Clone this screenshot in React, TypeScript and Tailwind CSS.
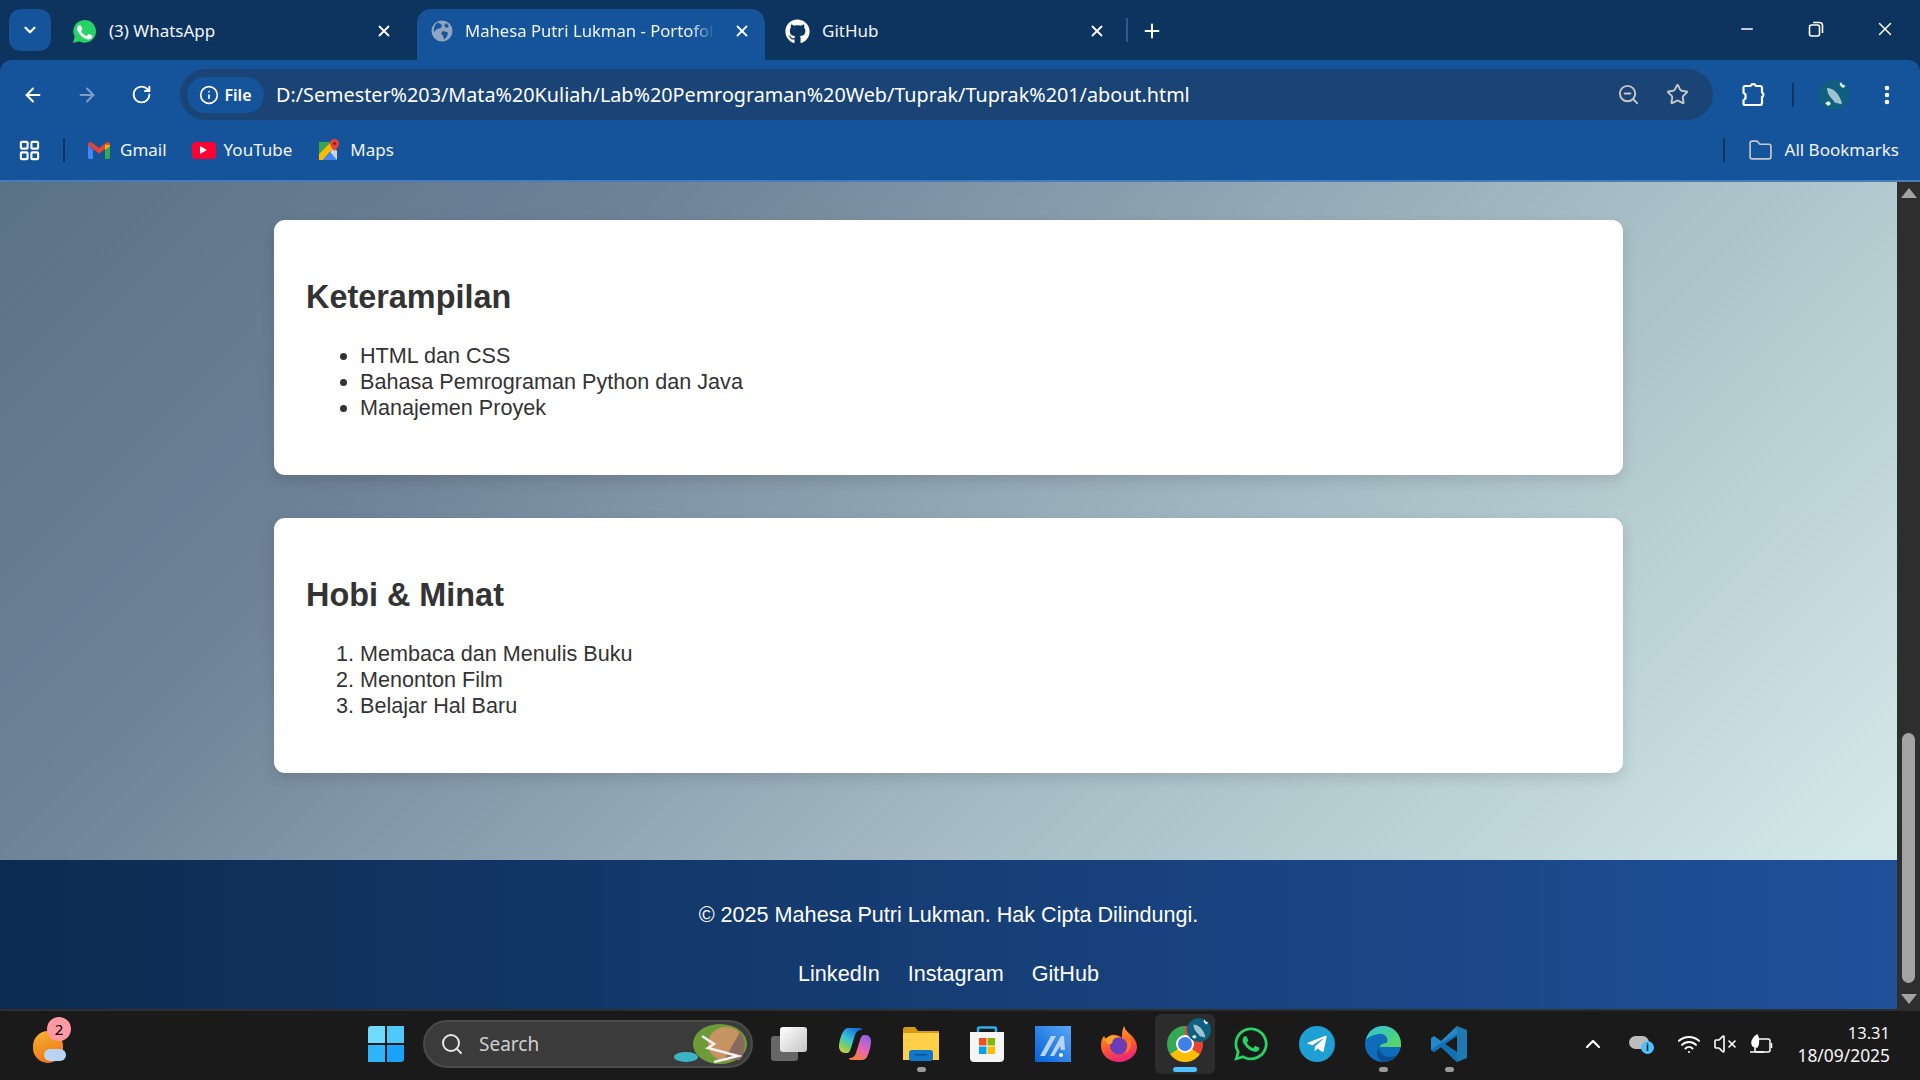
import React from 'react';
import { ArrowLeft, ArrowRight, RotateCw, Info, ZoomOut, Star, EllipsisVertical, Folder, X, Plus, Minus, ChevronDown, ChevronUp, Search, Wifi, VolumeX, LayoutGrid } from 'lucide-react';
import { FaGithub, FaWhatsapp, FaTelegramPlane } from 'react-icons/fa';

function WhatsAppColor({ size = 24 }: { size?: number }) {
  return (
    <svg width={size} height={size} viewBox="0 0 24 24">
      <path fill="#25d366" d="M1 23l1.600-5.900A10.900 10.900 0 1 1 6.900 21.400z" />
      <path fill="#fff" d="M8.600 6.600c-.3-.6-.5-.6-.8-.6h-.7c-.3 0-.6.1-1 .5-.3.4-1.200 1.200-1.200 3s1.300 3.400 1.500 3.700c.2.200 2.500 4 6.200 5.400 3 1.200 3.600 1 4.300.9.600-.1 2.100-.9 2.400-1.700.3-.8.300-1.500.2-1.700-.1-.1-.3-.2-.7-.4l-2.400-1.200c-.3-.1-.6-.2-.8.2l-1.100 1.400c-.2.200-.4.300-.8.100-.4-.2-1.500-.6-2.900-1.800-1.100-1-1.800-2.200-2-2.500-.2-.4 0-.6.2-.8l.5-.6c.2-.2.200-.4.400-.6.100-.2 0-.5 0-.7z" />
    </svg>
  );
}

function GmailIcon() {
  return (
    <svg width="22" height="17" viewBox="0 0 22 17">
      <path fill="#4285f4" d="M0 3v12.500C0 16.300.7 17 1.500 17H5V8z" />
      <path fill="#34a853" d="M22 3v12.500c0 .8-.7 1.500-1.500 1.500H17V8z" />
      <path fill="#ea4335" d="M0 3l5 4 6 4.500L17 7l5-4c0-2.500-2-3.500-3.500-2.500L11 6 3.500.5C2 -.5 0 .5 0 3z" />
      <path fill="#fbbc04" d="M17 2.800L22 3v1l-5 4z" />
    </svg>
  );
}

function YouTubeIcon() {
  return (
    <div className="w-6 h-[17px] rounded-[4px] bg-[#ff0033] flex items-center justify-center">
      <div className="w-0 h-0 border-y-[4px] border-y-transparent border-l-[7px] border-l-white" />
    </div>
  );
}

function MapsIcon() {
  return (
    <svg width="21" height="22" viewBox="0 0 21 22">
      <path fill="#34a853" d="M0 3h12L0 15z" />
      <path fill="#fbbc04" d="M0 15L12 3l3 5L4 21H0z" />
      <path fill="#4285f4" d="M4 21l7-8 7 8z" />
      <path fill="#c8d4e0" d="M11 13l4-5 3 4v9z" />
      <path fill="#ea4335" d="M15.500 0a4.500 4.500 0 0 0-4.500 4.500c0 3 4.500 7.500 4.500 7.500s4.500-4.500 4.500-7.500A4.500 4.500 0 0 0 15.500 0z" />
      <circle cx="15.500" cy="4.500" r="1.600" fill="#8f1d14" />
    </svg>
  );
}

function Avatar({ size }: { size: number }) {
  return (
    <svg width={size} height={size} viewBox="0 0 30 30">
      <circle cx="15" cy="15" r="15" fill="#0f5f7e" />
      <path d="M8 8c6 0 12 5 15 15-1 2-3 1-4 0-2 1-4-1-5-3C11 17 8 13 8 8z" fill="#9fc3d1" />
      <path d="M22 2l1.500 2.500 3 1-2 2.500-2-1-2-2.500z" fill="#dcecf2" />
      <path d="M6 23l4-2 2 3-3 2z" fill="#eef4f6" />
    </svg>
  );
}

function PuzzleIcon() {
  return (
    <svg width="26" height="25" viewBox="0 0 26 25" fill="none" stroke="white" strokeWidth="2.200" strokeLinejoin="round">
      <path d="M3 4h5.500a3 3 0 0 1 5.500 0h4a2 2 0 0 1 2 2v4.500a2.500 2.500 0 0 1 0 4.500v6a2 2 0 0 1-2 2H3a1.500 1.500 0 0 1-1.500-1.500V18a3 3 0 0 0 2-3.500 3 3 0 0 0-2-3.500V5.500A1.500 1.500 0 0 1 3 4z" />
    </svg>
  );
}

function TabStrip() {
  return (
    <div className="h-[60px] bg-[#0d335f] flex items-end pl-[9px]">
      <div className="w-[42px] h-[42px] mb-[9px] rounded-[12px] bg-[#15539a] flex items-center justify-center shrink-0">
        <ChevronDown size={18} strokeWidth={3} className="text-white" />
      </div>
      <div className="ml-[12px] w-[354px] shrink-0 flex items-center h-[51px] pb-[7px] pl-[9px] pr-[24px]">
        <WhatsAppColor size={25} />
        <span className="ml-[12px] flex-1 text-[17px] text-[#f1f5fa]">(3) WhatsApp</span>
        <X size={18} strokeWidth={2.400} className="text-white" />
      </div>
      <div className="w-[348px] shrink-0 flex items-center h-[51px] pb-[7px] pl-[14px] pr-[14px] bg-[#15539a] rounded-t-[14px]">
        <svg width="22" height="22" viewBox="0 0 22 22" className="shrink-0">
          <circle cx="11" cy="11" r="10.500" fill="#8fa6c1" />
          <path fill="#15539a" d="M7 2.500l4 2.500-1 3-4 1-3 3c-.5-4 1-8 4-9.500zM12 11l5 1.500-1 4-3 3-1-4-2-2zM15 3l3 3-2 2-3-2z" />
        </svg>
        <span className="ml-[12px] flex-1 overflow-hidden whitespace-nowrap text-[16.700px] text-[#f1f5fa] [mask-image:linear-gradient(90deg,#000_90%,transparent)]">Mahesa Putri Lukman - Portofolio</span>
        <X size={18} strokeWidth={2.400} className="ml-[18px] shrink-0 text-white" />
      </div>
      <div className="ml-[3px] w-[360px] shrink-0 flex items-center h-[51px] pb-[7px] pl-[17px] pr-[22px]">
        <FaGithub size={25} className="text-white" />
        <span className="ml-[12px] flex-1 text-[17px] text-[#f1f5fa]">GitHub</span>
        <X size={18} strokeWidth={2.400} className="text-white" />
      </div>
      <div className="w-[2px] h-[24px] mb-[18px] bg-[#2d5a8e] -ml-[2px]" />
      <Plus size={22} strokeWidth={2.200} className="ml-[13px] mb-[18px] text-white" />
      <div className="ml-auto flex items-center h-[60px] pb-[2px]">
        <Minus size={18} strokeWidth={2} className="text-white mr-[52px]" />
        <svg width="16" height="16" viewBox="0 0 16 16" fill="none" stroke="white" strokeWidth="1.600" className="mr-[50px]">
          <rect x="1.500" y="4" width="10" height="11" rx="2" />
          <path d="M5 1.500h6.500a3 3 0 0 1 3 3V12" />
        </svg>
        <X size={22} strokeWidth={1.600} className="text-white mr-[24px]" />
      </div>
    </div>
  );
}

function Toolbar() {
  return (
    <div className="h-[60px] flex items-center pl-[22px] pt-[9px] bg-[#15539a] rounded-t-[12px]">
      <ArrowLeft size={22} strokeWidth={2.200} className="text-white" />
      <ArrowRight size={22} strokeWidth={2.200} className="ml-[32px] text-[#7d9dc4]" />
      <RotateCw size={21} strokeWidth={2.200} className="ml-[33px] text-white" />
      <div className="ml-[28px] w-[1533px] h-[51px] rounded-full bg-[#1b4476] flex items-center pl-[7px] pr-[24px] shrink-0">
        <div className="w-[77px] h-9 rounded-full bg-[#15539a] flex items-center justify-center gap-[5px] shrink-0">
          <Info size={20} strokeWidth={2} className="text-white" />
          <span className="text-[16px] font-semibold text-white">File</span>
        </div>
        <span className="ml-[12px] text-[19.770px] text-white whitespace-nowrap">D:/Semester%203/Mata%20Kuliah/Lab%20Pemrograman%20Web/Tuprak/Tuprak%201/about.html</span>
        <ZoomOut size={23} strokeWidth={2} className="ml-auto text-[#c7c7c7]" />
        <Star size={23} strokeWidth={2} className="ml-[26px] text-[#c7c7c7]" />
      </div>
      <div className="ml-[29px]"><PuzzleIcon /></div>
      <div className="ml-[24px] w-[2px] h-[24px] bg-[#0d335f]" />
      <div className="ml-[25px]"><Avatar size={30} /></div>
      <EllipsisVertical size={24} strokeWidth={2.600} className="ml-[26px] text-white" />
    </div>
  );
}

function BookmarksBar() {
  return (
    <div className="h-[62px] bg-[#15539a] border-b-2 border-[#4a7cbb] flex items-center pl-[18px] pr-[21px] text-[17px] text-[#f1f5fa]">
      <LayoutGrid size={23} strokeWidth={2.200} className="text-white" />
      <div className="ml-[22px] w-[2px] h-[24px] bg-[#0d335f]" />
      <div className="ml-[23px] flex items-center gap-[10px]"><GmailIcon /><span>Gmail</span></div>
      <div className="ml-[25px] flex items-center gap-[8px]"><YouTubeIcon /><span>YouTube</span></div>
      <div className="ml-[27px] flex items-center gap-[10px]"><MapsIcon /><span>Maps</span></div>
      <div className="ml-auto w-[2px] h-[24px] bg-[#0d335f]" />
      <Folder size={25} strokeWidth={1.600} className="ml-[23px] text-[#c7c7c7]" />
      <span className="ml-[12px]">All Bookmarks</span>
    </div>
  );
}

function Card({ title, children }: { title: string; children: React.ReactNode }) {
  return (
    <section className="w-[1349px] mx-auto bg-white rounded-[11px] px-[32px] pt-[32px] pb-[32px] shadow-[0_5px_14px_rgba(0,0,0,0.12)]">
      <h2 className="mt-[27px] mb-[27px] text-[32.400px] leading-[37px] font-bold text-[#333]">{title}</h2>
      {children}
    </section>
  );
}

function Page() {
  return (
    <div className="flex-1 min-w-0 flex flex-col font-['Liberation_Sans',sans-serif] text-[21.600px] leading-[26px] text-[#333]">
      <main className="flex-1 flex flex-col gap-[43px] pt-[38px] bg-[linear-gradient(135deg,#5a7286_0%,#6e8298_26%,#a5bcc4_63%,#d4eaea_100%)]">
        <Card title="Keterampilan">
          <ul className="list-disc pl-[54px] mb-[22px]">
            <li>HTML dan CSS</li>
            <li>Bahasa Pemrograman Python dan Java</li>
            <li>Manajemen Proyek</li>
          </ul>
        </Card>
        <Card title="Hobi & Minat">
          <ol className="list-decimal pl-[54px] mb-[22px]">
            <li>Membaca dan Menulis Buku</li>
            <li>Menonton Film</li>
            <li>Belajar Hal Baru</li>
          </ol>
        </Card>
      </main>
      <footer className="h-[149px] pt-[42px] bg-[linear-gradient(90deg,#0c2b50,#20509a)] text-white text-center">
        <p>© 2025 Mahesa Putri Lukman. Hak Cipta Dilindungi.</p>
        <div className="mt-[33px] flex justify-center gap-[28px]">
          <span>LinkedIn</span>
          <span>Instagram</span>
          <span>GitHub</span>
        </div>
      </footer>
    </div>
  );
}

function Scrollbar() {
  return (
    <div className="w-[23px] shrink-0 bg-[#2e2e2e] flex flex-col items-center pt-[6px] pb-[5px]">
      <div className="w-0 h-0 border-x-[8px] border-x-transparent border-b-[10px] border-b-[#a3a3a3]" />
      <div className="mt-auto w-[13px] h-[250px] rounded-full bg-[#a3a3a3]" />
      <div className="mt-[11px] w-0 h-0 border-x-[8px] border-x-transparent border-t-[10px] border-t-[#a3a3a3]" />
    </div>
  );
}

function AppSlot({ children, dot }: { children: React.ReactNode; dot?: boolean }) {
  return (
    <div className="relative w-[66px] h-[60px] flex items-center justify-center">
      {children}
      {dot && <div className="absolute bottom-[2px] left-[29px] w-[9px] h-[5px] rounded-full bg-[#9a9a9a]" />}
    </div>
  );
}

function Taskbar() {
  return (
    <div className="h-[71px] bg-[#1a1a1a] border-t-2 border-[#2e2e2e] pb-[3px] flex items-center text-white shrink-0">
      {/* weather */}
      <div className="relative ml-[33px] w-[36px] h-[36px] mt-[2px]">
        <div className="w-[30px] h-[32px] mt-[4px] rounded-full bg-[linear-gradient(160deg,#f5b53a,#f06a0a)]" />
        <div className="absolute left-[11px] top-[22px] w-[22px] h-[12px] rounded-full bg-[#b9d3f2]" />
        <div className="absolute left-[14px] -top-[10px] w-[24px] h-[24px] rounded-full bg-[#ff9aa2] flex items-center justify-center text-[15px] text-black">2</div>
      </div>
      {/* start */}
      <div className="ml-[299px] grid grid-cols-2 gap-[2px] w-[36px] h-[36px] shrink-0">
        <div className="bg-[#6fdcff] rounded-tl-[3px]" />
        <div className="bg-[#4fc8fb]" />
        <div className="bg-[#2fb4fa]" />
        <div className="bg-[#18a2f8] rounded-br-[3px]" />
      </div>
      {/* search */}
      <div className="ml-[19px] relative w-[330px] h-[48px] rounded-full bg-[#3b3b3b] border-2 border-[#4a4a4a] flex items-center pl-[15px] shrink-0">
        <Search size={24} strokeWidth={2} className="text-[#e6e6e6]" />
        <span className="ml-[15px] text-[19px] text-[#cfcfcf]">Search</span>
        <svg width="76" height="44" viewBox="0 0 76 44" className="absolute right-[1px] top-[0px]">
          <ellipse cx="12" cy="35" rx="12" ry="5" fill="#3bb5c4" />
          <ellipse cx="46" cy="22" rx="27" ry="20" fill="#6f9a3a" />
          <ellipse cx="52" cy="22" rx="18" ry="17" fill="#c69462" />
          <path d="M66 10c6 6 6 20 0 28H50z" fill="#8a6a5c" />
          <path d="M28 14l12 8-6 4 30 8-24 6" fill="none" stroke="#f2f2f2" strokeWidth="2.500" />
        </svg>
      </div>
      {/* apps */}
      <div className="ml-[3px] flex items-center shrink-0">
        <AppSlot>
          <div className="relative w-[36px] h-[34px]">
            <div className="absolute left-0 bottom-0 w-[27px] h-[25px] rounded-[3px] bg-[#666]" />
            <div className="absolute right-0 top-0 w-[27px] h-[25px] rounded-[3px] bg-[linear-gradient(135deg,#fff,#c4c4c4)]" />
          </div>
        </AppSlot>
        <AppSlot>
          <svg width="34" height="32" viewBox="0 0 34 32">
            <defs>
              <linearGradient id="cp1" x1="0.700" y1="0" x2="0.100" y2="1"><stop offset="0" stopColor="#1670d8" /><stop offset="0.450" stopColor="#38c0d8" /><stop offset="0.750" stopColor="#7bd25a" /><stop offset="1" stopColor="#f5c63c" /></linearGradient>
              <linearGradient id="cp2" x1="0.800" y1="0" x2="0.300" y2="1"><stop offset="0" stopColor="#8f5fe8" /><stop offset="0.550" stopColor="#e868b0" /><stop offset="1" stopColor="#f5803c" /></linearGradient>
            </defs>
            <path fill="url(#cp2)" d="M24 32H14c-2 0-3-1-3-2 4 0 6-2 7-5l4-13c1-3 2-5 4-5h2c3 0 5 3 5 6 0 5-2 12-4 16-1 2-3 3-5 3z" />
            <path fill="url(#cp1)" d="M10 0h11c2 0 3 1 3 2-4 0-6 2-7 5l-4 13c-1 3-2 5-4 5H7c-3 0-6-3-6-6 0-5 2-12 4-15 1-2 3-4 5-4z" />
          </svg>
        </AppSlot>
        <AppSlot dot>
          <svg width="36" height="34" viewBox="0 0 36 34">
            <path fill="#d69a12" d="M0 2c0-1 1-2 2-2h10l3 4h21v6H0z" />
            <path fill="#ffcf4a" d="M0 6h36v27H0z" />
            <rect x="6" y="23" width="24" height="11" rx="3" fill="#0f78c8" />
            <rect x="12" y="27" width="12" height="1.500" fill="#0a4f88" />
          </svg>
        </AppSlot>
        <AppSlot>
          <svg width="36" height="36" viewBox="0 0 36 36">
            <path d="M9 8V3a1.500 1.500 0 0 1 1.500-1.500h15A1.500 1.500 0 0 1 27 3v5" fill="none" stroke="#2ab0ec" strokeWidth="2.500" />
            <path fill="#f5f5f5" d="M1 6h34v26a4 4 0 0 1-4 4H5a4 4 0 0 1-4-4z" />
            <rect x="10" y="12" width="7.500" height="7.500" fill="#f25022" />
            <rect x="18.500" y="12" width="7.500" height="7.500" fill="#7fba00" />
            <rect x="10" y="20.500" width="7.500" height="7.500" fill="#00a4ef" />
            <rect x="18.500" y="20.500" width="7.500" height="7.500" fill="#ffb900" />
          </svg>
        </AppSlot>
        <AppSlot>
          <svg width="36" height="36" viewBox="0 0 36 36">
            <defs>
              <linearGradient id="blu" x1="0" y1="1" x2="1" y2="0"><stop offset="0" stopColor="#0563d8" /><stop offset="1" stopColor="#5aa6f5" /></linearGradient>
            </defs>
            <rect width="36" height="36" fill="url(#blu)" />
            <path fill="#b8d4f2" d="M5 30L16 10h5L10 30zM15 30l11-20h3l1 14h-4l-1-4-6 10z" />
            <circle cx="26" cy="29" r="2" fill="#fff" />
          </svg>
        </AppSlot>
        <AppSlot>
          <svg width="36" height="36" viewBox="0 0 36 36">
            <defs>
              <linearGradient id="ffx" x1="0.200" y1="0" x2="0.500" y2="1"><stop offset="0" stopColor="#ffb422" /><stop offset="0.550" stopColor="#ff5a2e" /><stop offset="1" stopColor="#e8247a" /></linearGradient>
            </defs>
            <path fill="url(#ffx)" d="M23 0c1 4 4 6 7 9 4 4 6 8 6 12 0 8-8 15-18 15S0 29 0 20c0-5 1-8 3-10l2 3c2-3 6-5 9-4 2 0 5 1 7 3 0-4 0-8 2-12z" />
            <circle cx="17.500" cy="20" r="8.500" fill="#6b3bb8" />
            <path fill="#ffa422" d="M4 13c4-3 9-4 14-2-3 0-5 1-6 3l-1 3c-1 1-3 2-4 1-2-1-3-3-3-5z" />
            <path fill="#ff7a1f" d="M26 8c3 3 5 7 4 12-1 3-3 6-6 7 2-3 3-7 2-11z" />
          </svg>
        </AppSlot>
        {/* chrome, the running window */}
        <div className="mx-[3px]">
          <div className="relative w-[60px] h-[60px] rounded-[6px] bg-[#2c2c2c] flex items-center justify-center">
            <div className="relative w-[36px] h-[36px] rounded-full bg-[conic-gradient(#ea4335_0deg_125deg,#fbbc04_125deg_235deg,#34a853_235deg_360deg)] flex items-center justify-center">
              <div className="w-[18px] h-[18px] rounded-full bg-[#3f7fe8] border-2 border-white" />
              <div className="absolute -right-[8px] -top-[8px]"><Avatar size={24} /></div>
            </div>
            <div className="absolute bottom-[2px] left-[18px] w-[24px] h-[5px] rounded-full bg-[#4cc2ff]" />
          </div>
        </div>
        <AppSlot><FaWhatsapp size={38} className="text-[#25d366]" /></AppSlot>
        <AppSlot>
          <div className="w-[36px] h-[36px] rounded-full bg-[#1e9fd6] flex items-center justify-center">
            <FaTelegramPlane size={22} className="text-white" />
          </div>
        </AppSlot>
        <AppSlot dot>
          <svg width="36" height="36" viewBox="0 0 36 36">
            <defs>
              <linearGradient id="edg" x1="0" y1="0" x2="1" y2="1"><stop offset="0" stopColor="#2bc4d8" /><stop offset="1" stopColor="#5fd85a" /></linearGradient>
            </defs>
            <circle cx="18" cy="18" r="18" fill="#0f6cbd" />
            <path fill="url(#edg)" d="M1 14C3 5 10 0 18 0c10 0 18 8 18 18v3H15c0-3 4-4 7-4 2-6-3-10-9-9C7 9 3 11 1 14z" />
            <path fill="#0c4f94" d="M14 21c0 6 5 10 11 10 3 0 6-1 8-3-3 5-8 8-15 8 -5-2-8-8-4-15z" />
          </svg>
        </AppSlot>
        <AppSlot dot>
          <svg width="36" height="36" viewBox="0 0 36 36">
            <path fill="#2489ca" d="M26 0L10 15 3 10 0 12v12l3 2 7-5 16 15 10-4V4z" />
            <path fill="#1070b3" d="M26 36L10 21l-7 5-3-2 8-6 18-10z" />
            <path fill="#0f1a22" opacity="0.150" d="M26 0v36l10-4V4z" />
            <path fill="#1a1a1a" d="M26 10L14 18l12 8z" />
          </svg>
        </AppSlot>
      </div>
      {/* tray */}
      <div className="ml-auto mr-[30px] flex items-center shrink-0">
        <ChevronUp size={24} strokeWidth={2.200} className="text-white" />
        <div className="relative ml-[24px] w-[24px] h-[20px]">
          <div className="absolute left-0 top-[2px] w-[20px] h-[13px] rounded-full bg-[#bdbdbd]" />
          <div className="absolute -right-[1px] bottom-0 w-[13px] h-[13px] rounded-full bg-[#4cc2ff] flex items-center justify-center text-[10px] font-bold text-[#1a1a1a]">i</div>
        </div>
        <Wifi size={24} strokeWidth={2} className="ml-[24px] text-white" />
        <VolumeX size={24} strokeWidth={1.600} className="ml-[12px] text-white" />
        <svg width="24" height="20" viewBox="0 0 24 20" fill="none" stroke="white" strokeWidth="1.500" className="ml-[12px]">
          <rect x="6" y="5" width="15" height="13" rx="2" />
          <path d="M22.500 9v5" />
          <path fill="white" d="M8 1c-3 2-5 5-5 8 0 3 2 4 5 4 2-3 2-9 0-12z" />
          <path d="M1 18h14" />
        </svg>
        <div className="ml-[21px] w-[96px] text-right leading-[23px] text-[#f5f5f5]">
          <div className="text-[16.500px]">13.31</div>
          <div className="text-[17.400px] whitespace-nowrap">18/09/2025</div>
        </div>
      </div>
    </div>
  );
}

export default function App() {
  return (
    <div className="w-[1920px] h-[1080px] flex flex-col overflow-hidden bg-[#1a1a1a] font-['Noto_Sans',sans-serif]">
      <div className="shrink-0 bg-[#0d335f]">
        <TabStrip />
        <Toolbar />
        <BookmarksBar />
      </div>
      <div className="flex-1 min-h-0 flex">
        <Page />
        <Scrollbar />
      </div>
      <Taskbar />
    </div>
  );
}
